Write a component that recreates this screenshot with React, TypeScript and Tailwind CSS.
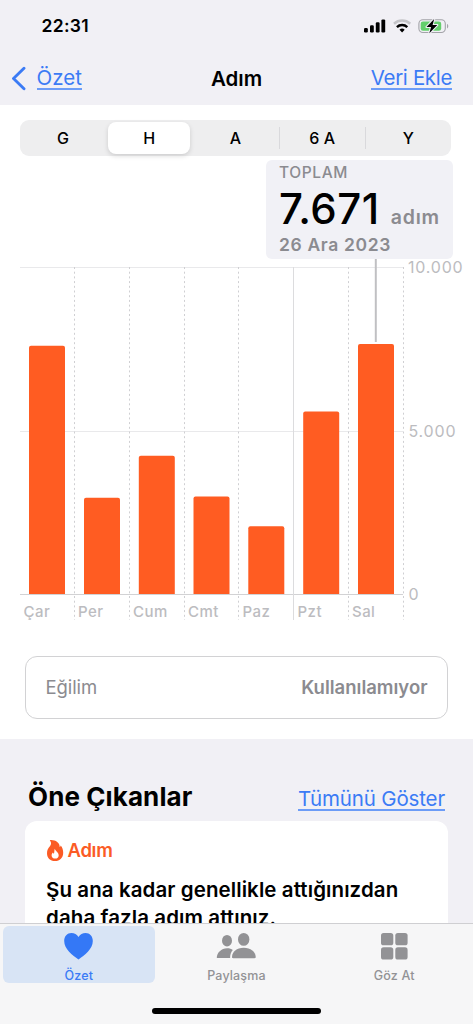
interface Day {
  label: string;
  x: number;
  top: number;
}

interface TabProps {
  label: string;
  active?: boolean;
  children: React.ReactNode;
}

const ranges = ["G", "H", "A", "6 A", "Y"];

const days: Day[] = [
  { label: "Çar", x: 29, top: 345.7 },
  { label: "Per", x: 84, top: 497.7 },
  { label: "Cum", x: 138.8, top: 455.8 },
  { label: "Cmt", x: 193.5, top: 496.5 },
  { label: "Paz", x: 248.3, top: 526.3 },
  { label: "Pzt", x: 303.2, top: 411.5 },
  { label: "Sal", x: 358, top: 344 },
];

const labelX = [23.5, 78, 133, 188, 242.5, 297.5, 352];
const dotted = [74.5, 129.5, 184.5, 238.5, 348.5, 403.5];

const StatusBar = () => (
  <div className="h-[52px] flex items-center justify-between pl-[41.5px] pr-[24px]">
    <span className="text-[17.5px] leading-none font-semibold tracking-[0.3px]">22:31</span>
    <svg width="86" height="20" viewBox="0 0 86 20">
      <rect x="1" y="12" width="3.8" height="4.5" rx="1.2" />
      <rect x="7" y="9.3" width="3.8" height="7.2" rx="1.2" />
      <rect x="12.8" y="6.3" width="3.8" height="10.2" rx="1.2" />
      <rect x="18.4" y="3.4" width="3.8" height="13.1" rx="1.2" />
      <path d="M31 7.7a12.2 12.2 0 0 1 16.2 0" fill="none" stroke="#c4c4c8" strokeWidth="2.5" />
      <path d="M33.9 11.1a7.8 7.8 0 0 1 10.400 0" fill="none" stroke="#000" strokeWidth="2.500" />
      <path d="M39.100 16.500l-2.600-2.700a3.800 3.800 0 0 1 5.200 0z" />
      <rect x="55.900" y="3.700" width="26.400" height="12.800" rx="4" fill="none" stroke="#a3a3a8" strokeWidth="1.100" />
      <rect x="57.700" y="5.500" width="20.500" height="9.200" rx="2.300" fill="#64cf6c" />
      <path d="M84 8v4.400c1.700-.6 1.700-3.800 0-4.400z" fill="#a3a3a8" />
      <path
        d="M71.200 2.900l-7.700 8.100h4.600l-1.800 6.200 8-8.100h-4.700z"
        stroke="#f1f0f5"
        strokeWidth="2.200"
        paintOrder="stroke"
        strokeLinejoin="round"
      />
    </svg>
  </div>
);

const NavBar = () => (
  <div className="h-[53px] grid grid-cols-3 items-center text-[20.5px] leading-[24px] pl-[11px] pr-[21px]">
    <div className="flex items-center text-[#3b7bf5]">
      <svg width="15" height="26" viewBox="0 0 15 26" fill="none" stroke="#3b7bf5" strokeWidth="2.9" strokeLinecap="round" strokeLinejoin="round">
        <path d="M13 2.300L2.500 12.500 13 22.700" />
      </svg>
      <span className="ml-[10.5px] border-b-2 border-[#6c9cf7] leading-[21px] tracking-[0px]">Özet</span>
    </div>
    <h1 className="text-center font-semibold tracking-[0px] pl-[10px]">Adım</h1>
    <div className="flex justify-end text-[#3b7bf5]">
      <span className="border-b-2 border-[#6c9cf7] leading-[21px] tracking-[-0.35px] whitespace-nowrap">Veri Ekle</span>
    </div>
  </div>
);

const RangePicker = () => (
  <div className="mt-[15px] ml-[20px] w-[431px] h-[36px] rounded-[9px] bg-[#eeeeef] grid grid-cols-5 items-center text-[16px] font-medium">
    {ranges.map((range, i) => (
      <div
        key={range}
        className={
          range === "H"
            ? "h-[32px] mx-[2px] flex items-center justify-center rounded-[8px] bg-white shadow-[0_2px_5px_rgba(0,0,0,0.14)]"
            : i > 2
              ? "h-[22px] flex items-center justify-center border-l border-[#d9d9dc]"
              : "h-[22px] flex items-center justify-center"
        }
      >
        {range}
      </div>
    ))}
  </div>
);

const Summary = () => (
  <div className="mt-[4px] ml-[266px] w-[187px] h-[99px] rounded-[6px] bg-[#f1f1f6] pl-[13px] text-[#8b8b90]">
    <div className="h-[25px] leading-[25px] text-[15.5px] font-medium tracking-[0.6px]">TOPLAM</div>
    <div className="h-[47px] flex items-baseline leading-[47px]">
      <span className="text-[42px] font-medium text-black tracking-[0.5px]">7.671</span>
      <span className="ml-[11px] text-[19.5px] font-semibold tracking-[0.8px]">adım</span>
    </div>
    <div className="h-[25px] leading-[26px] text-[17.5px] font-semibold tracking-[0.65px]">26 Ara 2023</div>
  </div>
);

const Chart = () => (
  <svg className="block" width="473" height="371" viewBox="0 259 473 371">
    <path d="M20 267.5H403M20 431.5H403" stroke="#e9e9eb" />
    <path d="M20 594.5H403" stroke="#d2d2d4" />
    {dotted.map((x) => (
      <path key={x} d={`M${x} 267V620`} stroke="#cfcfd2" strokeDasharray="2 2.7" />
    ))}
    <path d="M293.5 267V620" stroke="#dcdcde" />
    <path d="M375.8 259V342" stroke="#c0c0c3" strokeWidth="2" />
    {days.map((day) => (
      <path
        key={day.label}
        d={`M${day.x} 594V${day.top + 2}q0-2 2-2h32q2 0 2 2V594z`}
        fill="#ff5c22"
      />
    ))}
    <g fill="#bcbcc0" className="text-[15px] font-medium tracking-[0.45px]">
      {days.map((day, i) => (
        <text key={day.label} x={labelX[i]} y="616.5">{day.label}</text>
      ))}
    </g>
    <g fill="#bcbcc0" className="text-[16px] font-normal tracking-[0.8px]">
      <text x="408" y="273">10.000</text>
      <text x="408.5" y="437">5.000</text>
      <text x="408.5" y="600">0</text>
    </g>
  </svg>
);

const Highlights = () => (
  <section className="mt-[20px] h-[185px] bg-[#f1f0f5]">
    <div className="h-[82px] pt-[39px] pl-[28px] pr-[28px] flex justify-between">
      <h2 className="text-[26px] leading-[37px] font-bold tracking-[0.1px]">Öne Çıkanlar</h2>
      <div className="pt-[10px]">
        <span className="block border-b-2 border-[#6c9cf7] text-[20.5px] leading-[21px] text-[#3b7bf5] tracking-[-0.15px]">Tümünü Göster</span>
      </div>
    </div>
    <div className="mx-[25px] h-[120px] rounded-t-[12px] bg-white pl-[21px] pt-[17px]">
      <div className="flex items-center h-[24px] text-[#fb5b25]">
        <svg width="18" height="23" viewBox="0 0 18 23">
          <path d="M3.800 1.200C9 .6 13.800 3.500 13.700 8c.6-.3.900-.8 1-1.500 1.700 2 2.500 4.500 2.500 7.200 0 5-3.300 8.300-8.200 8.300S1 18.900 1 14.200c0-3.200 1.300-4.900 2.700-6.600 1.700-2.100 2-4.200.1-6.400z" fill="#fb5b25" />
          <path d="M8.800 9.800c.4 2.200 3.900 3.600 3.900 6.400 0 2.100-1.400 3.400-3.500 3.400s-3.600-1.300-3.600-3.200c0-1.300.6-2.200 1.400-3 .1.700.4 1.100.9 1.300.7-1.500.2-3.300.9-4.900z" fill="#fff" />
        </svg>
        <span className="ml-[3.5px] pt-[2px] text-[18.5px] font-semibold tracking-[-0.3px]">Adım</span>
      </div>
      <p className="mt-[14px] text-[20.5px] leading-[28px] font-semibold tracking-[0.09px] whitespace-nowrap">
        Şu ana kadar genellikle attığınızdan
        <br />
        daha fazla adım attınız.
      </p>
    </div>
  </section>
);

const Tab = ({ label, active, children }: TabProps) => (
  <div
    className={
      active
        ? "h-[57px] ml-[3px] mr-[3px] rounded-[6px] bg-[#d8e4f5] text-[#3b7bf5] flex flex-col items-center"
        : "h-[57px] text-[#929295] flex flex-col items-center"
    }
  >
    <div className="h-[38px] pt-[5px]">{children}</div>
    <span className="pt-[2px] text-[12.5px] leading-[26px] font-medium tracking-[0.15px]">{label}</span>
  </div>
);

const TabBar = () => (
  <nav className="h-[101px] shrink-0 border-t border-[#cfcfd2] bg-[#f6f6f7]">
    <div className="grid grid-cols-3 pt-[2px]">
      <Tab label="Özet" active>
        <svg width="30" height="30" viewBox="0 0 30 30" fill="#3478f6">
          <path d="M14.500 28.400C8.500 24.500.2 18 .2 10 .2 5.200 3.300 2 7.400 2c3 0 5.500 1.500 7.100 4.100C16.100 3.500 18.600 2 21.600 2c4.100 0 7.200 3.200 7.200 8 0 8-8.300 14.500-14.300 18.400z" />
        </svg>
      </Tab>
      <Tab label="Paylaşma">
        <svg width="40" height="30" viewBox="0 0 40 30" fill="#929295">
          <ellipse cx="11" cy="9.700" rx="5" ry="5.800" />
          <path d="M.8 26.800c0-5 4.500-9.600 10.300-9.600 2.500 0 4.300.6 5.700 1.700-2 2.300-2.700 4.800-2.700 8.200H1.500c-.5 0-.7 0-.7-.3z" />
          <ellipse cx="27.700" cy="8.400" rx="5.700" ry="6.400" />
          <path d="M16 26c0-5 4.800-9.200 11.700-9.200S39.700 21 39.700 26c0 .8-.4 1.200-1.200 1.200H17.200c-.8 0-1.200-.4-1.200-1.200z" />
        </svg>
      </Tab>
      <Tab label="Göz At">
        <svg width="28" height="30" viewBox="0 0 28 30" fill="#929295">
          <rect x="1" y="2" width="12.300" height="12.300" rx="2.600" />
          <rect x="15.300" y="2" width="12.300" height="12.300" rx="2.600" />
          <rect x="1" y="16.300" width="12.300" height="12.300" rx="2.600" />
          <rect x="15.300" y="16.300" width="12.300" height="12.300" rx="2.600" />
        </svg>
      </Tab>
    </div>
    <div className="mt-[25px] ml-[152px] w-[169px] h-[6px] rounded-full bg-black" />
  </nav>
);

const App = () => {
  return (
    <div className="w-[473px] h-[1024px] flex flex-col overflow-hidden bg-white text-black font-['Inter',sans-serif]">
      <header className="h-[105px] shrink-0 bg-[#f1f0f5]">
        <StatusBar />
        <NavBar />
      </header>
      <main className="flex-1 min-h-0 overflow-hidden">
        <RangePicker />
        <Summary />
        <Chart />
        <div className="mt-[26px] mx-[25px] h-[63px] rounded-[12px] border border-[#d2d2d4] px-[19.5px] flex items-center justify-between text-[18.5px] text-[#8b8b90]">
          <span className="tracking-[-0.1px]">Eğilim</span>
          <span className="font-semibold tracking-[0px]">Kullanılamıyor</span>
        </div>
        <Highlights />
      </main>
      <TabBar />
    </div>
  );
};

export default App;
